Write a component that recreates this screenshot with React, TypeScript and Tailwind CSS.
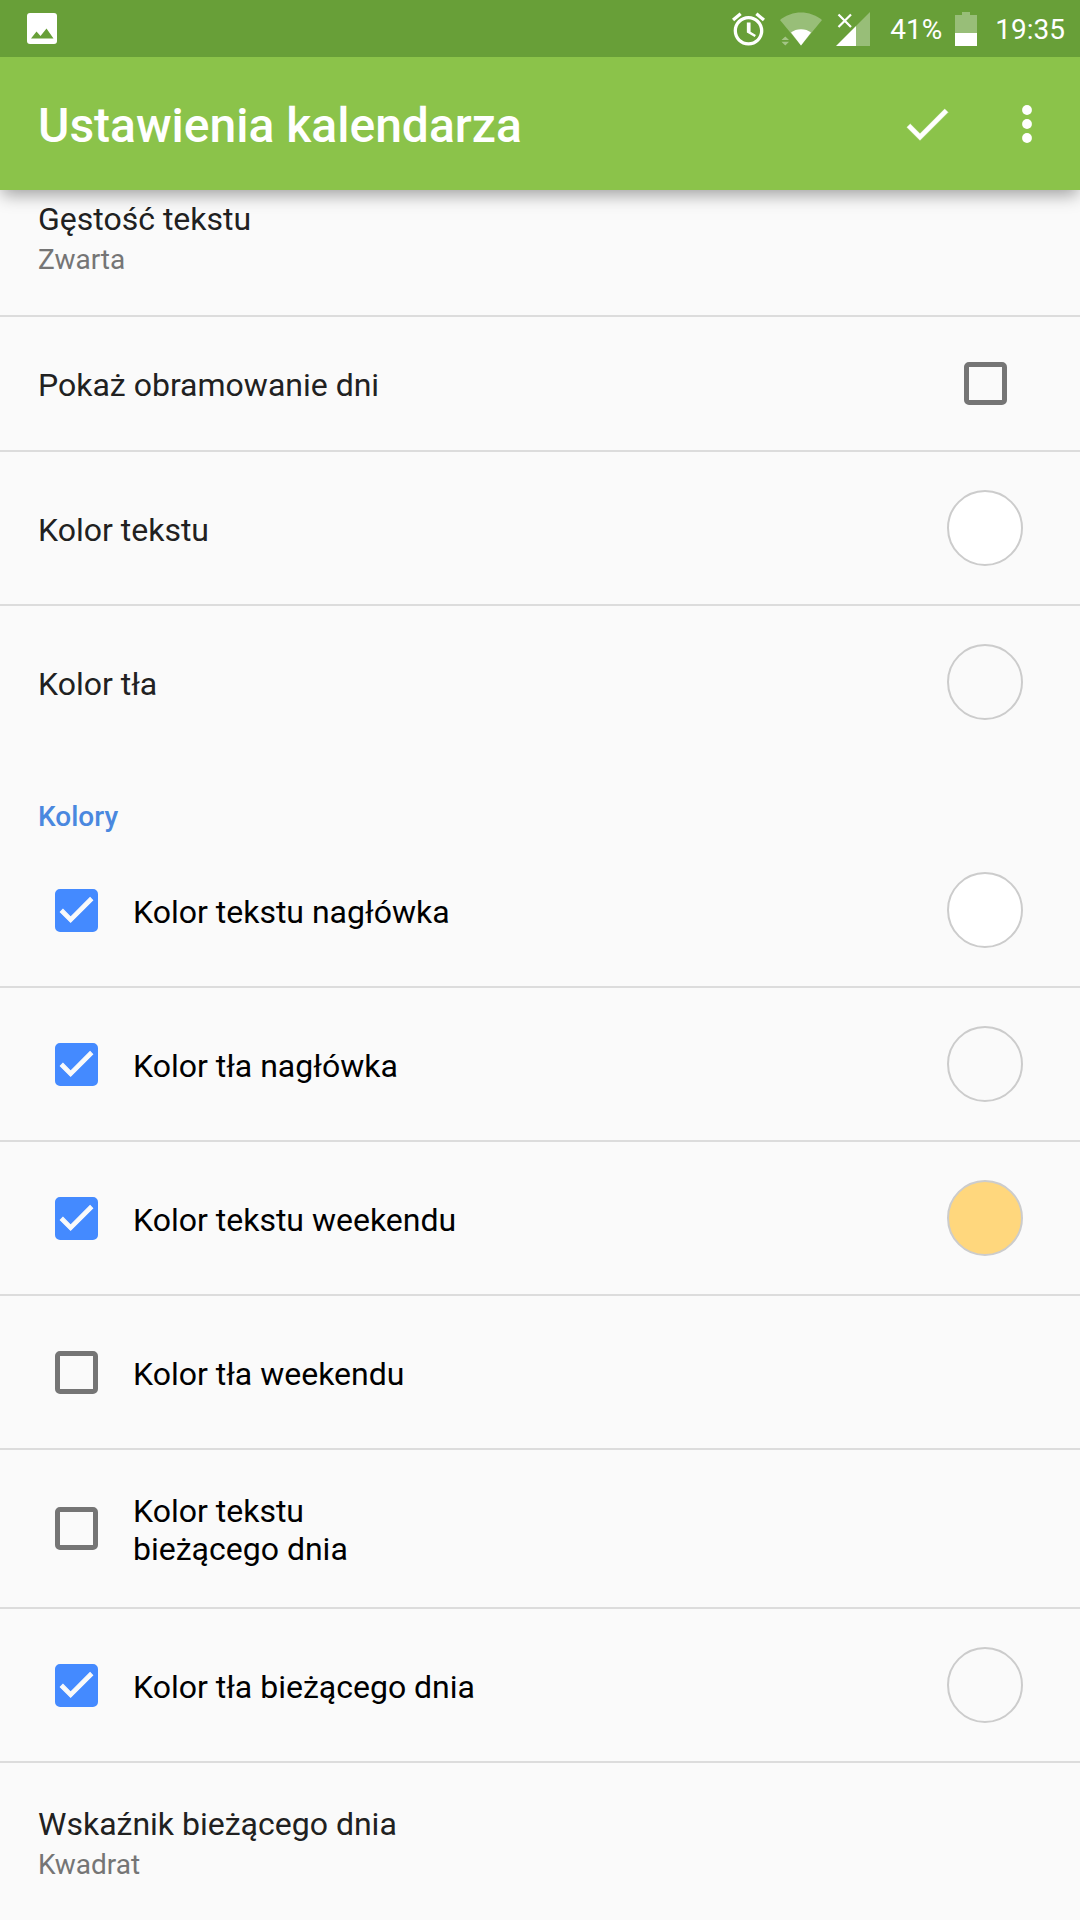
import { useState } from 'react';

const CHECK_PATH = 'M9 16.17L4.83 12l-1.42 1.41L9 19 21 7l-1.41-1.41z';

const COLOR_ROWS = [
  { id: 'header-text', label: 'Kolor tekstu nagłówka', checked: true, swatch: 'bg-white' },
  { id: 'header-bg', label: 'Kolor tła nagłówka', checked: true, swatch: 'bg-transparent' },
  { id: 'weekend-text', label: 'Kolor tekstu weekendu', checked: true, swatch: 'bg-[#ffd77d]' },
  { id: 'weekend-bg', label: 'Kolor tła weekendu', checked: false, swatch: '' },
  { id: 'today-text', label: 'Kolor tekstu\nbieżącego dnia', checked: false, swatch: '' },
  { id: 'today-bg', label: 'Kolor tła bieżącego dnia', checked: true, swatch: 'bg-transparent' },
];

function StatusBar() {
  return (
    <div className="flex h-[57px] items-center bg-[#689f38] pl-[27px] pr-[15px] text-[28px] text-white">
      <svg className="h-[31px] w-[30px]" viewBox="0 0 30 31" fill="none">
        <rect width="30" height="31" rx="3" fill="#fff" />
        <path d="M4 25.500l5.500-7 4 4.500L19.500 15.500l7 10z" fill="#689f38" />
      </svg>
      <div className="ml-auto flex items-center">
        <svg className="h-[34px] w-[33px]" viewBox="2 1.86 20 20.14" fill="currentColor">
          <path d="M22 5.720l-4.600-3.860-1.290 1.530 4.600 3.860L22 5.720zM7.880 3.390L6.600 1.860 2 5.710l1.290 1.530 4.590-3.850zM12.500 8H11v6l4.750 2.850.750-1.230-3.250-2V8zM12 4c-4.970 0-9 4.030-9 9s4.020 9 9 9c4.970 0 9-4.030 9-9s-4.030-9-9-9zm0 16c-3.870 0-7-3.130-7-7s3.130-7 7-7 7 3.130 7 7-3.130 7-7 7z" />
        </svg>
        <svg className="ml-[15px] h-[34px] w-[42px]" viewBox="0 0 42 34" fill="currentColor">
          <path d="M0 8C12-2 30-2 42 8L21 33.500z" opacity=".32" />
          <path d="M11 20.500C16 16 26 16 31 20.500L21 33.500z" />
          <path d="M1.500 28L5.300 24.500 9 28zM1.500 29.800L5.300 33.500 9 29.800z" opacity=".4" />
        </svg>
        <svg className="ml-[14px] h-[34px] w-[34px]" viewBox="0 0 34 34" fill="currentColor">
          <path d="M20 14L34 0v34H20z" opacity=".32" />
          <path d="M0 34L20 14v20z" />
          <path d="M2.500 2.500L15 15M15 2.500L2.500 15" stroke="currentColor" strokeWidth="2.2" />
        </svg>
        <span className="ml-5 pt-0.5">41%</span>
        <svg className="ml-[13px] h-[34px] w-[22px]" viewBox="0 0 22 34" fill="currentColor">
          <path d="M7 0h8v3h7v18H0V3h7z" opacity=".32" />
          <path d="M0 21h22v13H0z" />
        </svg>
        <span className="ml-[18px] pt-0.5">19:35</span>
      </div>
    </div>
  );
}

function Checkbox({ id, defaultChecked = false }: { id: string; defaultChecked?: boolean }) {
  const [checked, setChecked] = useState(defaultChecked);
  return (
    <span className="grid size-[43px] shrink-0">
      <input
        id={id}
        type="checkbox"
        checked={checked}
        onChange={(e) => setChecked(e.target.checked)}
        className="col-start-1 row-start-1 size-[43px] appearance-none rounded-[5px] border-5 border-[#757575] checked:border-[#448aff] checked:bg-[#448aff]"
      />
      {checked && (
        <svg className="pointer-events-none col-start-1 row-start-1 size-[43px]" viewBox="0.5 0.9 23.4 23.4" fill="#fafafa" stroke="#fafafa" strokeWidth="0.6">
          <path d={CHECK_PATH} />
        </svg>
      )}
    </span>
  );
}

function Swatch({ label, color }: { label: string; color: string }) {
  return <button type="button" aria-label={label} className={`size-[76px] shrink-0 rounded-full border-2 border-[#cccccc] ${color}`} />;
}

export default function App() {
  return (
    <div className="min-h-screen bg-[#fafafa] font-[Roboto,sans-serif] text-[32px] leading-[38px] text-[#212121]">
      <header className="relative z-10 shadow-[0_7px_16px_-2px_rgba(0,0,0,0.36)]">
        <StatusBar />
        <div className="flex h-[133px] items-center bg-[#8bc34a] pl-[38px] pr-[25px] text-white">
          <h1 className="flex-1 pt-1 text-[48px] font-medium">Ustawienia kalendarza</h1>
          <button type="button" aria-label="Zapisz">
            <svg className="size-14" viewBox="0 0 24 24" fill="currentColor" stroke="currentColor" strokeWidth="0.2"><path d={CHECK_PATH} /></svg>
          </button>
          <button type="button" aria-label="Więcej opcji" className="ml-11">
            <svg className="size-14" viewBox="0 0 24 24" fill="currentColor">
              <circle cx="12" cy="6" r="2.1" />
              <circle cx="12" cy="12" r="2.1" />
              <circle cx="12" cy="18" r="2.1" />
            </svg>
          </button>
        </div>
      </header>

      <main>
        <button type="button" className="block w-full border-b-2 border-[#dcdcdc] px-[38px] pb-[34px] pt-[9px] text-left">
          <span className="block leading-10">Gęstość tekstu</span>
          <span className="block text-[28px] leading-[42px] text-[#757575]">Zwarta</span>
        </button>

        <div className="flex min-h-[135px] items-center justify-between border-b-2 border-[#dcdcdc] pl-[38px] pr-[57px]">
          <label htmlFor="day-borders" className="pt-[3px]">Pokaż obramowanie dni</label>
          <div className="flex w-[76px] justify-center"><Checkbox id="day-borders" /></div>
        </div>

        <div className="flex min-h-[154px] items-center justify-between border-b-2 border-[#dcdcdc] pl-[38px] pr-[57px]">
          <span className="pt-[3px]">Kolor tekstu</span>
          <Swatch label="Kolor tekstu" color="bg-white" />
        </div>

        <div className="flex min-h-[152px] items-center justify-between pl-[38px] pr-[57px]">
          <span className="pt-[3px]">Kolor tła</span>
          <Swatch label="Kolor tła" color="bg-transparent" />
        </div>

        <section>
          <h2 className="px-[38px] pt-[42px] text-[28px] font-medium leading-[34px] text-[#4a88df]">Kolory</h2>
          {COLOR_ROWS.map((row) => (
            <div key={row.id} className="flex min-h-[154px] items-center border-b-2 border-[#dcdcdc] pl-[55px] pr-[57px] text-black">
              <Checkbox id={row.id} defaultChecked={row.checked} />
              <label htmlFor={row.id} className="ml-[35px] flex-1 whitespace-pre-line pb-[39px] pt-[42px]">{row.label}</label>
              {row.swatch && <Swatch label={row.label} color={row.swatch} />}
            </div>
          ))}
        </section>

        <button type="button" className="block w-full px-[38px] pb-[34px] pt-[41px] text-left">
          <span className="block leading-10">Wskaźnik bieżącego dnia</span>
          <span className="block text-[28px] leading-[42px] text-[#757575]">Kwadrat</span>
        </button>
      </main>
    </div>
  );
}
